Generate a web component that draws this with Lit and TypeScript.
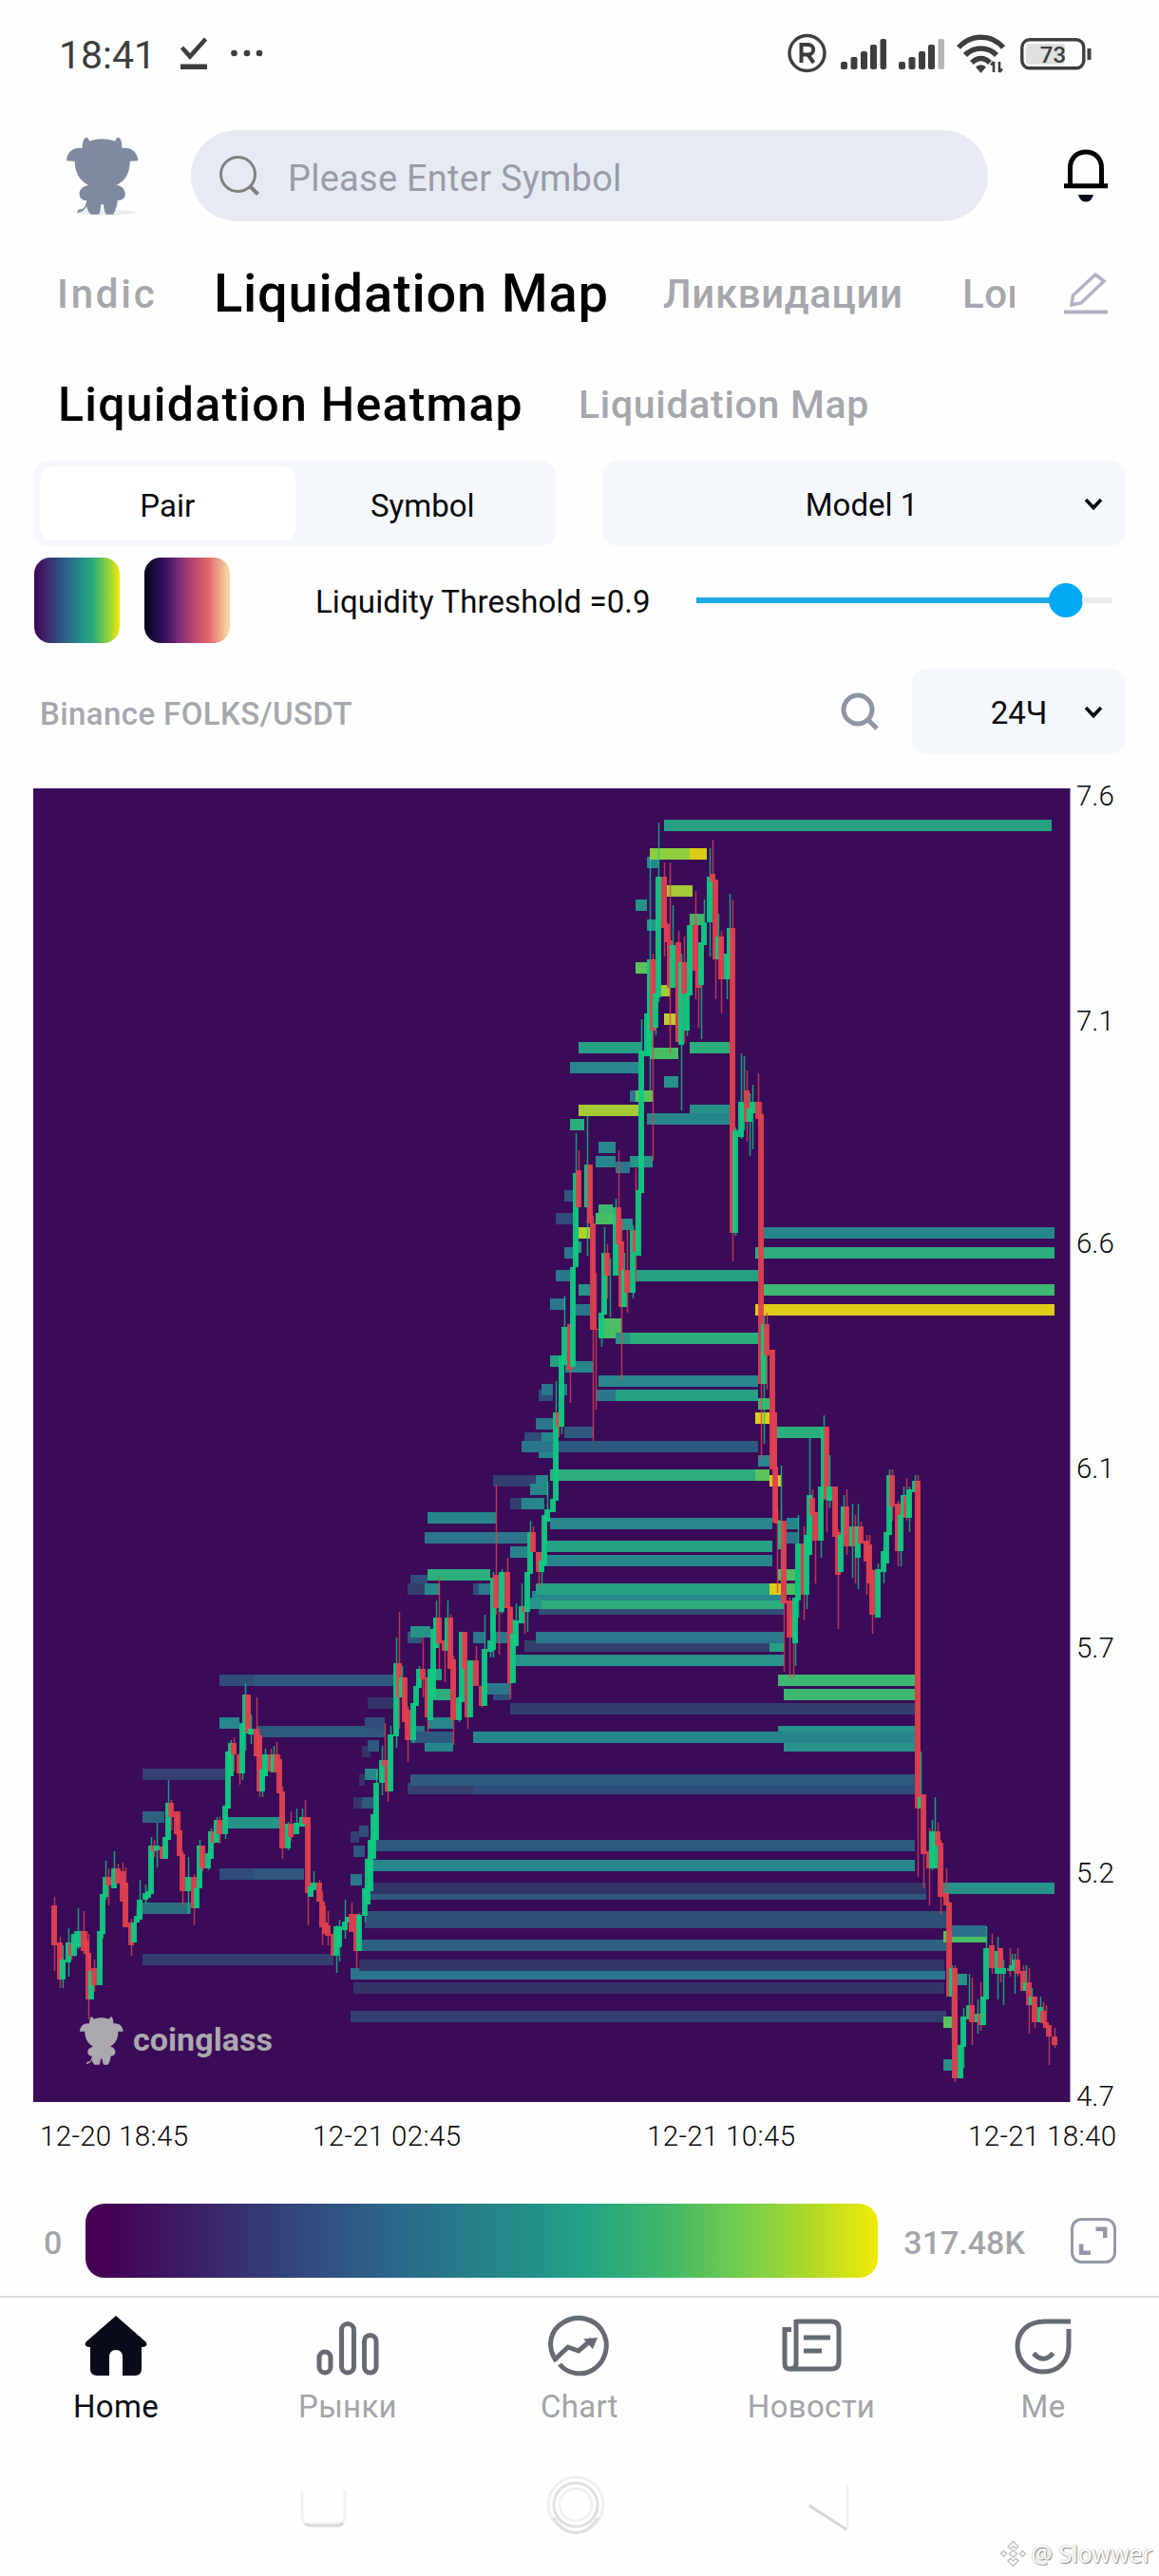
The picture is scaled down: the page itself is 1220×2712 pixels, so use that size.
import {css, html, LitElement, svg} from "lit"
import {customElement, property, state} from "lit/decorators.js"
import {classMap} from "lit/directives/class-map.js"

type Band = [x1: number, x2: number, y: number, color: string, height?: number]
type Candle = [side: string, x: number, high: number, top: number, bottom: number, low: number]

const A = "#333468"
const B = "#33406f"
const C = "#304c78"
const D = "#2e587e"
const E = "#2b768a"
const F = "#27868c"
const G = "#269288"
const H = "#25a083"
const I = "#2cae7c"
const J = "#3db870"
const K = "#5cc35a"
const L = "#a2cb35"
const Y = "#dccd18"

const BANDS: Band[] = [
    // upper part
    [699, 1107, 863, H], [681, 693, 902, F], [684, 726, 893, "#8ecf3f"], [726, 744, 893, Y],
    [702, 729, 932, L], [669, 681, 947, G], [681, 693, 968, G], [726, 741, 962, "#44b06c"],
    [669, 684, 1013, K], [696, 705, 1037, L], [699, 711, 1067, "#c0cf30"], [609, 675, 1097, H],
    [684, 714, 1103, "#48bd66"], [726, 769, 1097, I], [600, 672, 1118, F], [699, 714, 1133, G],
    [663, 669, 1148, E], [669, 687, 1148, K], [609, 672, 1163, L], [726, 769, 1163, G],
    [681, 769, 1172, F], [600, 615, 1178, I], [630, 648, 1202, F], [627, 648, 1217, F],
    [648, 663, 1223, E], [663, 687, 1217, G], [594, 603, 1253, D], [585, 603, 1277, C],
    [630, 645, 1268, J], [627, 648, 1277, "#48bd66"], [654, 666, 1283, G], [609, 621, 1292, "#b4cf2a"],
    [594, 604, 1313, E], [603, 612, 1307, G], [585, 600, 1337, E], [609, 621, 1352, G],
    [579, 595, 1367, E], [606, 621, 1373, E], [670, 798, 1337, H], [630, 654, 1388, "#4cbd62", 21],
    [648, 663, 1403, G], [663, 798, 1403, I], [579, 590, 1427, H], [595, 624, 1433, F],
    [630, 798, 1448, F], [628, 648, 1463, E], [648, 798, 1463, H], [567, 582, 1463, C],
    [570, 582, 1457, E], [588, 597, 1457, E], [564, 582, 1493, E], [594, 624, 1502, D],
    [552, 570, 1508, C], [570, 582, 1508, F], [567, 582, 1523, F], [549, 582, 1517, E],
    [588, 798, 1517, D], [579, 795, 1547, I], [795, 810, 1547, K], [519, 564, 1553, B],
    [564, 577, 1553, F], [558, 577, 1562, F],
    // open levels on the right
    [804, 1110, 1292, F], [795, 1110, 1313, I], [804, 1110, 1352, J], [795, 1110, 1373, Y],
    [798, 810, 1472, J], [795, 810, 1487, Y], [817, 866, 1502, I], [798, 810, 1532, F],
    [810, 822, 1553, "#dcc828"],
    // middle
    [537, 549, 1577, B], [549, 573, 1577, F], [450, 522, 1592, F], [447, 555, 1613, E],
    [537, 555, 1628, F], [579, 813, 1598, F], [576, 813, 1622, H], [573, 813, 1637, F],
    [432, 450, 1658, C], [429, 447, 1667, B], [447, 463, 1667, F], [450, 516, 1652, I],
    [498, 504, 1667, C], [504, 516, 1667, E], [560, 825, 1675, F], [564, 810, 1667, H],
    [558, 570, 1682, G], [570, 825, 1685, I, 9], [567, 825, 1694, C, 6], [810, 822, 1667, Y],
    [819, 837, 1652, "#4cbd62"], [828, 837, 1667, "#4cbd62"], [828, 841, 1598, F], [828, 840, 1613, E],
    [429, 444, 1718, D], [432, 453, 1712, G], [498, 510, 1718, E], [522, 534, 1718, E],
    [552, 810, 1727, B], [810, 825, 1727, H], [564, 825, 1718, E], [543, 825, 1742, G],
    [231, 267, 1763, C], [267, 414, 1763, D], [456, 465, 1757, H], [456, 474, 1778, I],
    [519, 537, 1778, C], [513, 537, 1772, E], [387, 414, 1787, A], [537, 963, 1793, B],
    [819, 963, 1763, J], [825, 963, 1778, J], [270, 405, 1817, D], [384, 405, 1808, C],
    [450, 477, 1808, F], [435, 447, 1817, E], [447, 477, 1832, F], [432, 477, 1823, D],
    [819, 963, 1817, G], [825, 963, 1832, G], [498, 963, 1823, F], [381, 390, 1838, A],
    [387, 399, 1832, D], [378, 384, 1868, A], [384, 398, 1862, F], [429, 498, 1877, B],
    [498, 963, 1877, C, 12], [432, 963, 1868, D], [372, 381, 1892, A], [381, 393, 1892, D],
    // lower part
    [231, 252, 1808, F], [150, 237, 1862, B], [150, 173, 1907, "#2e6080"], [240, 297, 1913, G],
    [231, 267, 1967, C], [267, 320, 1967, D], [150, 201, 2003, "#2a7080"], [150, 351, 2057, B],
    [369, 378, 1928, B], [378, 388, 1922, C], [372, 384, 1943, D], [369, 381, 1973, E],
    [393, 963, 1937, D], [390, 963, 1958, F], [387, 975, 1982, A], [387, 975, 1994, D, 6],
    [384, 996, 2012, "#2e5078", 18], [381, 996, 2042, "#2e6080"], [378, 994, 2063, A],
    [369, 995, 2075, E, 9], [369, 378, 2072, E, 3], [372, 994, 2087, A], [369, 996, 2117, B],
    [992, 1110, 1982, G], [993, 1002, 2033, K], [1002, 1039, 2039, "#48bd66", 6],
    [1002, 1038, 2027, "#2b708a"], [1008, 1018, 2078, G], [993, 1002, 2123, K], [993, 1002, 2168, G]
]

// u = closed up, d = closed down
const CANDLES: Candle[] = [
    ["d", 54, 1997, 2006, 2048, 2075], ["d", 60, 2039, 2045, 2084, 2093], ["u", 63, 2048, 2063, 2084, 2093],
    ["u", 69, 2030, 2045, 2066, 2081], ["d", 72, 2036, 2046, 2059, 2063], ["u", 75, 2033, 2036, 2059, 2060],
    ["u", 79, 2009, 2033, 2050, 2052], ["d", 85, 2012, 2033, 2054, 2057], ["d", 88, 2033, 2043, 2057, 2060],
    ["d", 90, 2036, 2056, 2105, 2126], ["u", 93, 2075, 2075, 2105, 2105], ["d", 96, 2063, 2072, 2090, 2097],
    ["u", 102, 2033, 2033, 2090, 2090], ["u", 105, 1994, 1994, 2036, 2041], ["u", 108, 1959, 1976, 1997, 2000],
    ["d", 111, 1967, 1976, 1985, 2006], ["u", 117, 1949, 1967, 1988, 1988], ["d", 121, 1962, 1967, 1983, 1983],
    ["d", 126, 1961, 1970, 2002, 2002], ["d", 129, 1966, 1982, 2029, 2029], ["d", 135, 2020, 2024, 2048, 2059],
    ["u", 138, 2020, 2024, 2045, 2045], ["u", 141, 2008, 2017, 2024, 2024], ["u", 144, 1979, 2000, 2021, 2021],
    ["u", 150, 1984, 1993, 2000, 2004], ["u", 153, 1988, 1991, 1998, 1998], ["u", 156, 1934, 1943, 1994, 1994],
    ["d", 159, 1937, 1943, 1949, 1955], ["u", 162, 1919, 1943, 1948, 1966], ["d", 168, 1943, 1944, 1957, 1957],
    ["u", 171, 1934, 1934, 1957, 1957], ["u", 174, 1874, 1898, 1937, 1937], ["d", 177, 1895, 1898, 1913, 1927],
    ["d", 183, 1907, 1907, 1931, 1931], ["d", 186, 1907, 1927, 1954, 1954], ["d", 189, 1949, 1952, 1991, 2006],
    ["u", 195, 1955, 1976, 1991, 2015], ["d", 201, 1973, 1976, 2009, 2027], ["u", 204, 1980, 1988, 2009, 2009],
    ["u", 207, 1937, 1943, 1988, 1988], ["d", 210, 1943, 1943, 1967, 1970], ["u", 216, 1948, 1951, 1967, 1969],
    ["u", 219, 1925, 1928, 1957, 1957], ["d", 222, 1922, 1928, 1940, 1941], ["u", 225, 1913, 1916, 1940, 1940],
    ["d", 228, 1913, 1916, 1931, 1941], ["u", 234, 1900, 1901, 1931, 1936], ["u", 237, 1843, 1844, 1904, 1904],
    ["u", 240, 1832, 1835, 1870, 1870], ["d", 243, 1829, 1835, 1847, 1865], ["d", 249, 1845, 1847, 1867, 1879],
    ["u", 252, 1814, 1814, 1867, 1874], ["u", 255, 1772, 1784, 1825, 1843], ["d", 258, 1784, 1784, 1824, 1824],
    ["u", 261, 1805, 1820, 1826, 1836], ["d", 267, 1787, 1820, 1849, 1849], ["d", 270, 1824, 1827, 1886, 1892],
    ["u", 273, 1860, 1863, 1886, 1892], ["u", 276, 1841, 1847, 1870, 1870], ["d", 282, 1841, 1847, 1865, 1865],
    ["u", 285, 1838, 1847, 1866, 1866], ["d", 288, 1834, 1847, 1866, 1866], ["d", 291, 1847, 1852, 1888, 1888],
    ["d", 294, 1881, 1886, 1946, 1957], ["u", 300, 1918, 1920, 1946, 1948], ["d", 303, 1907, 1920, 1934, 1938],
    ["u", 309, 1904, 1919, 1931, 1931], ["u", 315, 1904, 1913, 1923, 1923], ["d", 318, 1895, 1913, 1920, 1920],
    ["d", 321, 1913, 1913, 1993, 2027], ["u", 324, 1984, 1986, 1997, 1997], ["u", 327, 1970, 1982, 1990, 1990],
    ["d", 333, 1979, 1982, 2002, 2002], ["d", 336, 1991, 2002, 2029, 2048], ["d", 339, 2006, 2024, 2036, 2036],
    ["d", 342, 2012, 2027, 2038, 2048], ["d", 348, 2032, 2036, 2059, 2059], ["u", 351, 2027, 2028, 2059, 2077],
    ["u", 354, 2021, 2028, 2050, 2065], ["u", 360, 2000, 2023, 2032, 2041], ["u", 363, 2018, 2018, 2024, 2024],
    ["d", 367, 2003, 2015, 2034, 2034], ["d", 372, 2015, 2015, 2054, 2072], ["u", 375, 2014, 2016, 2054, 2054],
    ["u", 381, 1985, 1988, 2017, 2024], ["u", 384, 1956, 1957, 2005, 2005], ["u", 387, 1935, 1937, 1991, 1991],
    ["u", 390, 1906, 1910, 1957, 1957], ["u", 393, 1864, 1877, 1937, 1937], ["u", 399, 1838, 1853, 1877, 1890],
    ["d", 402, 1814, 1853, 1859, 1859], ["d", 405, 1853, 1855, 1886, 1897], ["u", 408, 1817, 1826, 1886, 1886],
    ["u", 414, 1724, 1751, 1828, 1840], ["d", 417, 1697, 1751, 1787, 1820], ["u", 420, 1754, 1766, 1787, 1787],
    ["d", 423, 1765, 1766, 1813, 1813], ["d", 426, 1796, 1800, 1832, 1855], ["u", 432, 1793, 1793, 1832, 1835],
    ["u", 435, 1772, 1775, 1796, 1796], ["u", 438, 1754, 1757, 1777, 1777], ["d", 442, 1724, 1757, 1768, 1787],
    ["d", 447, 1765, 1766, 1808, 1824], ["u", 450, 1757, 1757, 1811, 1811], ["u", 453, 1713, 1715, 1787, 1787],
    ["u", 456, 1685, 1703, 1735, 1735], ["d", 459, 1661, 1703, 1730, 1757], ["d", 465, 1726, 1727, 1738, 1771],
    ["u", 468, 1685, 1703, 1738, 1738], ["d", 471, 1700, 1703, 1757, 1757], ["d", 474, 1743, 1747, 1811, 1837],
    ["u", 480, 1786, 1787, 1811, 1813], ["u", 483, 1718, 1718, 1792, 1792], ["d", 486, 1718, 1718, 1757, 1757],
    ["d", 489, 1748, 1753, 1808, 1820], ["u", 492, 1748, 1748, 1808, 1808], ["d", 498, 1733, 1748, 1775, 1775],
    ["d", 504, 1772, 1775, 1796, 1798], ["u", 507, 1700, 1736, 1796, 1796], ["u", 513, 1727, 1727, 1739, 1745],
    ["u", 516, 1655, 1661, 1737, 1745], ["d", 519, 1563, 1658, 1693, 1700], ["d", 522, 1680, 1685, 1693, 1742],
    ["u", 525, 1652, 1655, 1697, 1699], ["d", 531, 1640, 1655, 1693, 1693], ["d", 534, 1691, 1692, 1772, 1789],
    ["u", 537, 1705, 1720, 1772, 1772], ["u", 540, 1688, 1706, 1733, 1733], ["u", 546, 1667, 1691, 1709, 1709],
    ["d", 549, 1691, 1692, 1697, 1720], ["u", 552, 1653, 1655, 1697, 1718], ["u", 555, 1601, 1613, 1657, 1657],
    ["d", 558, 1607, 1613, 1634, 1634], ["d", 564, 1634, 1634, 1655, 1671], ["u", 567, 1634, 1643, 1655, 1667],
    ["u", 570, 1595, 1595, 1648, 1648], ["u", 573, 1560, 1589, 1602, 1602], ["u", 579, 1577, 1578, 1592, 1592],
    ["u", 582, 1454, 1487, 1580, 1580], ["d", 585, 1485, 1487, 1502, 1513], ["u", 588, 1427, 1427, 1502, 1510],
    ["u", 591, 1364, 1397, 1437, 1437], ["d", 597, 1393, 1394, 1442, 1477], ["u", 600, 1334, 1334, 1439, 1439],
    ["u", 603, 1193, 1235, 1334, 1334], ["d", 606, 1211, 1232, 1271, 1271], ["u", 615, 1175, 1226, 1271, 1322],
    ["d", 618, 1226, 1226, 1288, 1288], ["d", 621, 1280, 1288, 1400, 1517], ["d", 624, 1340, 1399, 1400, 1484],
    ["u", 630, 1380, 1382, 1409, 1418], ["u", 633, 1292, 1319, 1384, 1384], ["d", 636, 1310, 1319, 1343, 1367],
    ["u", 639, 1325, 1343, 1343, 1387], ["u", 645, 1262, 1271, 1343, 1343], ["d", 648, 1211, 1271, 1310, 1310],
    ["d", 651, 1284, 1307, 1376, 1453], ["u", 654, 1319, 1337, 1376, 1376], ["d", 657, 1295, 1337, 1361, 1382],
    ["u", 663, 1290, 1295, 1361, 1367], ["d", 666, 1230, 1295, 1318, 1350], ["u", 669, 1250, 1253, 1322, 1322],
    ["u", 672, 1073, 1106, 1256, 1256], ["u", 678, 1067, 1067, 1112, 1112], ["u", 681, 905, 1010, 1110, 1148],
    ["d", 684, 1004, 1010, 1085, 1222], ["u", 687, 1046, 1046, 1082, 1090], ["u", 690, 866, 923, 1050, 1055],
    ["d", 696, 908, 923, 977, 1007], ["d", 699, 971, 973, 992, 992], ["d", 702, 908, 990, 1040, 1108],
    ["u", 705, 953, 995, 1040, 1040], ["d", 711, 980, 992, 1097, 1097], ["u", 714, 1004, 1013, 1100, 1169],
    ["d", 717, 986, 1013, 1046, 1098], ["u", 720, 1043, 1046, 1085, 1091], ["u", 723, 974, 974, 1048, 1048],
    ["d", 729, 938, 974, 1022, 1052], ["d", 732, 992, 1020, 1040, 1082], ["u", 735, 992, 992, 1037, 1094],
    ["u", 738, 947, 971, 995, 995], ["u", 744, 893, 923, 971, 1007], ["d", 747, 884, 920, 928, 928],
    ["d", 750, 926, 926, 1010, 1052], ["u", 753, 962, 986, 1010, 1010], ["d", 756, 980, 986, 1031, 1067],
    ["u", 762, 1004, 1004, 1031, 1052], ["u", 765, 941, 977, 1031, 1031], ["d", 768, 947, 977, 1298, 1328],
    ["u", 771, 1187, 1190, 1298, 1301], ["u", 777, 1109, 1160, 1197, 1199], ["u", 780, 1112, 1163, 1180, 1190],
    ["d", 783, 1127, 1148, 1181, 1202], ["u", 786, 1151, 1167, 1181, 1217], ["u", 789, 1142, 1160, 1172, 1210],
    ["d", 795, 1130, 1160, 1178, 1178], ["d", 798, 1160, 1173, 1457, 1537], ["u", 801, 1385, 1394, 1457, 1520],
    ["d", 804, 1382, 1394, 1427, 1463], ["d", 810, 1421, 1421, 1547, 1547], ["d", 812, 1487, 1487, 1547, 1547],
    ["d", 813, 1544, 1544, 1603, 1603], ["d", 815, 1589, 1600, 1604, 1677], ["u", 819, 1543, 1601, 1631, 1667],
    ["d", 822, 1601, 1601, 1688, 1760], ["d", 828, 1682, 1685, 1724, 1767], ["d", 832, 1683, 1700, 1724, 1766],
    ["u", 834, 1682, 1682, 1730, 1754], ["u", 837, 1595, 1625, 1685, 1703], ["d", 843, 1607, 1625, 1679, 1706],
    ["u", 846, 1610, 1616, 1679, 1694], ["u", 849, 1513, 1574, 1637, 1637], ["d", 852, 1568, 1577, 1595, 1595],
    ["d", 855, 1592, 1592, 1622, 1667], ["u", 861, 1565, 1565, 1622, 1640], ["u", 864, 1490, 1502, 1577, 1577],
    ["d", 867, 1502, 1502, 1579, 1613], ["u", 870, 1532, 1565, 1580, 1588], ["d", 876, 1565, 1565, 1618, 1618],
    ["d", 879, 1610, 1613, 1658, 1715], ["u", 882, 1616, 1616, 1655, 1655], ["u", 885, 1574, 1586, 1617, 1617],
    ["d", 888, 1568, 1586, 1628, 1637], ["u", 894, 1583, 1607, 1628, 1661], ["d", 897, 1595, 1607, 1628, 1667],
    ["u", 900, 1583, 1607, 1640, 1673], ["d", 903, 1602, 1607, 1625, 1625], ["d", 909, 1616, 1622, 1644, 1679],
    ["d", 912, 1616, 1626, 1667, 1667], ["d", 915, 1652, 1653, 1700, 1720], ["u", 921, 1646, 1652, 1703, 1703],
    ["u", 927, 1628, 1633, 1655, 1667], ["u", 930, 1612, 1613, 1646, 1646], ["u", 933, 1547, 1553, 1616, 1616],
    ["d", 936, 1547, 1553, 1586, 1601], ["d", 942, 1580, 1583, 1633, 1649], ["u", 945, 1592, 1595, 1633, 1649],
    ["u", 948, 1565, 1574, 1597, 1597], ["d", 951, 1556, 1575, 1598, 1601], ["u", 954, 1565, 1568, 1598, 1613],
    ["u", 960, 1553, 1559, 1571, 1571], ["d", 963, 1553, 1559, 1904, 1976], ["u", 966, 1844, 1892, 1904, 1904],
    ["d", 969, 1889, 1889, 1952, 1988], ["d", 975, 1925, 1949, 1967, 2006], ["u", 978, 1916, 1928, 1967, 1969],
    ["u", 981, 1892, 1928, 1967, 1967], ["d", 984, 1919, 1928, 1943, 1943], ["d", 987, 1937, 1940, 1997, 2015],
    ["d", 993, 1967, 1993, 2006, 2006], ["d", 996, 2002, 2003, 2102, 2102], ["u", 999, 2069, 2072, 2102, 2147],
    ["d", 1002, 2069, 2072, 2188, 2192], ["u", 1008, 2152, 2153, 2188, 2188], ["u", 1011, 2114, 2123, 2155, 2177],
    ["u", 1017, 2078, 2111, 2126, 2126], ["d", 1020, 2082, 2111, 2129, 2153], ["u", 1026, 2105, 2120, 2129, 2141],
    ["d", 1029, 2087, 2120, 2132, 2138], ["u", 1032, 2102, 2102, 2132, 2132], ["u", 1035, 2028, 2051, 2105, 2105],
    ["d", 1041, 2036, 2048, 2072, 2078], ["u", 1047, 2039, 2054, 2078, 2105], ["d", 1050, 2051, 2051, 2072, 2087],
    ["u", 1053, 2063, 2072, 2078, 2111], ["d", 1060, 2051, 2072, 2075, 2081], ["u", 1062, 2057, 2069, 2075, 2075],
    ["u", 1065, 2057, 2063, 2072, 2099], ["d", 1068, 2051, 2063, 2078, 2081], ["d", 1074, 2069, 2075, 2096, 2096],
    ["u", 1077, 2069, 2087, 2096, 2099], ["d", 1080, 2072, 2087, 2111, 2141], ["u", 1083, 2093, 2102, 2111, 2111],
    ["d", 1086, 2102, 2102, 2129, 2135], ["u", 1092, 2102, 2113, 2129, 2129], ["d", 1095, 2108, 2117, 2130, 2130],
    ["d", 1098, 2111, 2129, 2135, 2135], ["d", 1101, 2132, 2132, 2144, 2174], ["d", 1107, 2135, 2144, 2153, 2156]
]

const PRICES: [string, number][] = [
    ["7.6", 848], ["7.1", 1085], ["6.6", 1319], ["6.1", 1556], ["5.7", 1745], ["5.2", 1982], ["4.7", 2217]
]

const TIMES: [string, number][] = [
    ["12-20 18:45", 42], ["12-21 02:45", 329], ["12-21 10:45", 681], ["12-21 18:40", 1019]
]

const BULL = "M60 146C62 115 85 102 110 106C110 85 118 72 122 72C128 72 132 78 133 84C155 74 192 74 215 84C216 78 222 70 228 73C236 80 237 95 237 106C262 102 286 115 288 146L262 147C262 180 250 208 220 222C240 226 248 240 247 252C246 266 234 272 223 270C222 290 214 305 209 315L186 315C180 305 179 295 178 284L170 284C169 295 168 305 164 315L138 315C130 308 126 300 124 290C118 300 112 306 104 308L94 311C93 302 100 297 108 299C116 296 122 288 124 271C110 272 101 262 101 249C102 236 112 226 130 223C100 208 87 180 86 147Z"

@customElement("liquidation-chart")
export class LiquidationChart extends LitElement {
    static styles = css`
      :host {
        display: block;
        flex: none;
      }

      .chart {
        display: block;
        width: 1220px;
        height: 1460px;
        overflow: visible;
      }

      .axis {
        font: 300 29.5px Roboto, sans-serif;
        fill: #08080a;
      }

      .brand {
        font: 700 34px Roboto, sans-serif;
        fill: #aba8ae;
      }

      .u {
        fill: #0ecb81;
        stroke: #0ecb81;
      }

      .d {
        fill: #e0424f;
        stroke: #e0424f;
      }

      .body {
        stroke: none;
        fill-opacity: .93;
      }

      .wick {
        fill: none;
        stroke-width: 1.5;
        stroke-opacity: .78;
      }
    `

    render() {
        return html`
            <svg class="chart" viewBox="0 830 1220 1460">
                <rect x="35" y="830" width="1091.5" height="1383" fill="#3a0b58"></rect>
                ${BANDS.map(([x1, x2, y, color, h = 12]) => svg`
                    <rect x=${x1} y=${y} width=${x2 - x1} height=${h} fill=${color}></rect>`)}
                ${CANDLES.map(([side, x, high, top, bottom, low]) => svg`
                    <g class=${side}>
                        <path class="wick" d="M${x + 3.5} ${high}V${low}"></path>
                        <rect class="body" x=${x} y=${top} width="6" height=${bottom - top}></rect>
                    </g>`)}
                <path transform="translate(84 2123) scale(.2 .2085) translate(-60 -71)" d=${BULL} fill="#aba8ae"></path>
                <text class="brand" x="140" y="2159" textLength="147">coinglass</text>
                ${PRICES.map(([label, y]) => svg`<text class="axis" x="1133" y=${y}>${label}</text>`)}
                ${TIMES.map(([label, x]) => svg`<text class="axis" x=${x} y="2259" textLength="156">${label}</text>`)}
            </svg>`
    }
}

@customElement("bottom-tab")
export class BottomTab extends LitElement {
    @property() label = ""
    @property({type: Boolean}) active = false

    static styles = css`
      :host {
        display: flex;
        flex-direction: column;
        align-items: center;
        gap: 12px;
        flex: 1;
        font-size: 33px;
        line-height: 40px;
        letter-spacing: .3px;
        color: #a3a4a9;
      }

      .active {
        color: #0b0e14;
      }
    `

    render() {
        return html`<slot></slot><span class=${classMap({active: this.active})}>${this.label}</span>`
    }
}

@customElement("app-root")
export class AppRoot extends LitElement {
    @state() threshold = 0.9

    static styles = css`
      :host {
        display: flex;
        flex-direction: column;
        width: 1220px;
        height: 2712px;
        overflow: hidden;
        background: #fefefe;
        color: #08090c;
        font-family: Roboto, "Noto Sans", sans-serif;
      }

      :host > div {
        flex: none;
      }

      svg {
        display: block;
        flex: none;
        overflow: visible;
      }

      .status {
        display: flex;
        align-items: center;
        height: 114px;
        padding: 0 70px 0 62px;
        color: #3d3e40;
        font-size: 41px;
      }

      .clock {
        width: 128px;
        padding-top: 1px;
      }

      .grow {
        flex: 1;
      }

      .header {
        display: flex;
        align-items: center;
        height: 142px;
        padding: 0 54px 0 70px;
      }

      .search {
        display: flex;
        align-items: center;
        gap: 29px;
        width: 839px;
        height: 96px;
        margin: 0 80px 0 55px;
        padding-left: 30px;
        box-sizing: border-box;
        border-radius: 48px;
        background: #e6ebf3;
        color: #9a9ba8;
        font-size: 38px;
        letter-spacing: .25px;
      }

      .search span {
        padding-top: 6px;
      }

      .tabs {
        display: flex;
        align-items: center;
        height: 106px;
        margin-bottom: 2px;
        padding: 0 53px 0 60px;
        box-sizing: border-box;
        color: #a6a7ad;
        font-size: 42px;
        font-weight: 500;
        letter-spacing: .6px;
        white-space: nowrap;
      }

      .tabs > span {
        flex: none;
      }

      .tabs .current {
        width: 414px;
        margin: 0 59px 0 61px;
        color: #000;
        font-size: 56px;
        letter-spacing: .8px;
      }

      .tabs .first {
        width: 104px;
        letter-spacing: 2.8px;
      }

      .second {
        width: 254px;
      }

      .cut {
        width: 55px;
        margin: 0 52px 0 61px;
        overflow: hidden;
      }

      .subtabs {
        display: flex;
        align-items: center;
        gap: 58px;
        height: 121px;
        padding: 3px 0 0 61px;
        box-sizing: border-box;
        color: #a6a7ad;
        font-size: 41px;
        font-weight: 500;
        letter-spacing: .7px;
      }

      .subtabs .current {
        color: #000;
        font-size: 50px;
        letter-spacing: 1.25px;
      }

      .row {
        display: flex;
        align-items: center;
        padding: 0 36px;
        font-size: 33px;
      }

      .segment {
        display: flex;
        width: 549px;
        height: 90px;
        padding: 6px;
        box-sizing: border-box;
        border-radius: 15px;
        background: #f4f7fb;
      }

      .segment span {
        display: flex;
        flex: 1;
        align-items: center;
        justify-content: center;
        padding-top: 4px;
        box-sizing: border-box;
        border-radius: 14px;
      }

      .segment .on {
        background: #fff;
      }

      .select {
        display: flex;
        align-items: center;
        height: 90px;
        padding-right: 23px;
        box-sizing: border-box;
        border-radius: 15px;
        background: #f4f7fb;
      }

      .select span {
        flex: 1;
        padding-top: 2px;
        text-align: center;
      }

      .model {
        width: 549px;
        margin-left: 50px;
      }

      .model span {
        padding-left: 38px;
      }

      .period {
        width: 224px;
        margin-left: 35px;
      }

      .period span {
        padding-left: 44px;
      }

      .palettes {
        margin: 12px 0 27px;
      }

      .swatch {
        width: 90px;
        height: 90px;
        margin-right: 26px;
        border-radius: 17px;
      }

      .viridis {
        background: linear-gradient(90deg, #440154, #3a3270 18%, #2d5f88 36%, #23908a 55%, #2aa97c 68%, #72c94c 82%, #f0e80c);
      }

      .magma {
        background: linear-gradient(90deg, #04031a, #2f0f5c 22%, #7a2a79 40%, #b8466f 57%, #e0636a 74%, #f6d39f 97%);
      }

      .threshold {
        width: 354px;
        margin: 0 47px 0 64px;
        padding-top: 3px;
        letter-spacing: .1px;
        white-space: nowrap;
      }

      .slider {
        display: flex;
        align-items: center;
        width: 438px;
        height: 36px;
      }

      .filled {
        height: 6px;
        background: #1ba9ea;
      }

      .rest {
        flex: 1;
        height: 6px;
        background: #ebebed;
      }

      .thumb {
        width: 36px;
        height: 36px;
        margin: 0 -1px;
        border-radius: 50%;
        background: #03a9f4;
      }

      .pair {
        margin-bottom: 36px;
      }

      .title {
        padding: 4px 0 0 6px;
        color: #a6a7ad;
        font-weight: 500;
        letter-spacing: .4px;
      }

      .legend {
        display: flex;
        align-items: center;
        height: 78px;
        padding: 0 45px 0 46px;
        margin: 30px 0 19px;
        color: #a3a4a9;
        font-size: 34px;
        font-weight: 500;
      }

      .legend span {
        padding-top: 4px;
      }

      .scale {
        width: 834px;
        height: 78px;
        margin: 0 27px 0 25px;
        border-radius: 20px;
        background: linear-gradient(90deg, #440154 0, #440154 3%, #33427a 25%, #2b6a8b 40%, #238f87 56%, #22a384 63%, #3bb56d 72%, #74cd4c 83%, #aad92b 91%, #f2ea08);
      }

      .bottom {
        display: flex;
        height: 174px;
        padding-top: 19px;
        box-sizing: border-box;
        border-top: 2px solid #dadbdc;
      }

      .system {
        display: flex;
        height: 80px;
        padding: 10px 0 0 314px;
        box-sizing: border-box;
      }

      .author {
        display: flex;
        align-items: center;
        justify-content: flex-end;
        gap: 4px;
        padding-right: 7px;
        color: #fdfdfd;
        font: 25px "Noto Sans", sans-serif;
        line-height: 34px;
        text-shadow: 1px 1px 1px #8a8a8a, 0 0 2px #aaa;
      }
    `

    private chevron() {
        return html`
            <svg width="20" height="13" viewBox="0 0 20 13">
                <path d="M2 2L10 10.5L18 2" fill="none" stroke="#08090c" stroke-width="3.6"></path>
            </svg>`
    }

    private signal(last: string) {
        return html`
            <svg width="48" height="32" viewBox="0 0 48 32" fill="#3d3e40">
                <rect x="0" y="24" width="7" height="8" rx="2"></rect>
                <rect x="10.5" y="19" width="7" height="13" rx="2"></rect>
                <rect x="21" y="13" width="7" height="19" rx="2"></rect>
                <rect x="31" y="6" width="7" height="26" rx="2"></rect>
                <rect x="41.5" y="0" width="6.5" height="32" rx="2" fill=${last}></rect>
            </svg>`
    }

    private statusBar() {
        return html`
            <div class="status">
                <span class="clock">18:41</span>
                <svg width="28" height="34" viewBox="0 0 28 34">
                    <path d="M1.500 10L10 19.500L26.500 1" fill="none" stroke="#3d3e40" stroke-width="4.500"></path>
                    <rect x="0" y="27.500" width="28" height="5.500" fill="#3d3e40"></rect>
                </svg>
                <svg width="60" height="34" viewBox="0 0 60 34" fill="#3d3e40">
                    <circle cx="28.500" cy="16" r="3.300"></circle>
                    <circle cx="42" cy="16" r="3.300"></circle>
                    <circle cx="55" cy="16" r="3.300"></circle>
                </svg>
                <span class="grow"></span>
                <svg width="56" height="42" viewBox="0 0 56 42" fill="none" stroke="#3d3e40">
                    <circle cx="20.500" cy="20" r="18.500" stroke-width="3.400"></circle>
                    <path d="M14.500 30V11H21.500C29 11 29 21.500 21.500 21.500H14.500M21.500 21.500L27.500 30" stroke-width="4"></path>
                </svg>
                ${this.signal("#3d3e40")}
                <svg width="13" height="1"></svg>
                ${this.signal("#b4b5b7")}
                <svg width="80" height="42" viewBox="0 0 80 42" fill="none" stroke="#3d3e40" stroke-width="5.500">
                    <path d="M15 14C28-.5 50-.5 62 14"></path>
                    <path d="M22 22C31 12.500 46 12.500 55 22"></path>
                    <path d="M29 30C35 24 42 24 48 30"></path>
                    <path d="M38.500 41L33 34.500Q38.500 30 44 34.500Z" fill="#3d3e40" stroke="none"></path>
                    <path d="M52 40V29M49 32.500L52 29M58 29V40M61 36.500L58 40" stroke-width="2.600"></path>
                </svg>
                <svg width="76" height="34" viewBox="0 0 76 34">
                    <rect x="1.800" y="1.800" width="65" height="30" rx="8" fill="none" stroke="#3d3e40" stroke-width="3.400"></rect>
                    <rect x="6" y="6" width="41" height="22" rx="3" fill="#dfe0e0"></rect>
                    <path d="M72.500 11V23" stroke="#3d3e40" stroke-width="4"></path>
                    <text x="34.500" y="25.500" text-anchor="middle" font-size="24" font-weight="500" fill="#3d3e40">73</text>
                </svg>
            </div>`
    }

    private bottomBar() {
        return html`
            <div class="bottom">
                <bottom-tab label="Home" active>
                    <svg width="66" height="64" viewBox="0 0 66 64">
                        <path d="M33 0L65 28Q67 33 60 33V56Q60 63 53 63H40V44Q40 36 33 36Q26 36 26 44V63H13Q6 63 6 56V33Q-1 33 1 28Z" fill="#070c18"></path>
                    </svg>
                </bottom-tab>
                <bottom-tab label="Рынки">
                    <svg width="66" height="64" viewBox="0 0 66 64" fill="none" stroke="#656a73" stroke-width="5">
                        <rect x="3" y="38" width="12" height="22" rx="6"></rect>
                        <rect x="26.500" y="8.500" width="13" height="51.500" rx="6.500"></rect>
                        <rect x="50.500" y="20.500" width="12.500" height="39.500" rx="6.250"></rect>
                    </svg>
                </bottom-tab>
                <bottom-tab label="Chart">
                    <svg width="66" height="64" viewBox="0 0 66 64" fill="none" stroke="#656a73" stroke-width="5">
                        <path d="M8.500 48C-2 32 2 15 16 7C31-2 49 3 57 16C66 31 60 49 47 57C35 64 20 61 12 51"></path>
                        <path d="M7 46L21 33L32 37L46 25"></path>
                        <path d="M37 24.500L52 23L47 35Z" fill="#656a73" stroke="none"></path>
                    </svg>
                </bottom-tab>
                <bottom-tab label="Новости">
                    <svg width="66" height="64" viewBox="0 0 66 64" fill="none" stroke="#656a73" stroke-width="5">
                        <path d="M17 6H54Q62 6 62 14V48Q62 56 54 56H10Q5 56 5 50V14.500H12"></path>
                        <path d="M17 4V50Q17 56 11 56"></path>
                        <path d="M25 23H53M25 37H44"></path>
                    </svg>
                </bottom-tab>
                <bottom-tab label="Me">
                    <svg width="66" height="64" viewBox="0 0 66 64" fill="none" stroke="#656a73" stroke-width="5">
                        <path d="M62 6H35C18 6 6 16 6 32C6 48 18 59 33 59C49 59 60 48 60 32V14"></path>
                        <path d="M23 39.500Q33 51 43.500 39.500"></path>
                    </svg>
                </bottom-tab>
            </div>`
    }

    render() {
        return html`
            ${this.statusBar()}
            <div class="header">
                <svg width="76" height="82" viewBox="60 70 230 246" preserveAspectRatio="none">
                    <ellipse cx="182" cy="309" rx="98" ry="9" fill="#ececee"></ellipse>
                    <path d=${BULL} fill="#7f8a9f"></path>
                </svg>
                <div class="search">
                    <svg width="43" height="43" viewBox="0 0 43 43" fill="none" stroke="#808080" stroke-width="3">
                        <circle cx="19.500" cy="19.500" r="18"></circle>
                        <path d="M32 32L40.500 40.500" stroke-width="4"></path>
                    </svg>
                    <span>Please Enter Symbol</span>
                </div>
                <svg width="46" height="56" viewBox="0 0 46 56">
                    <path d="M6.500 38.500V20C6.500 9 14 3 23 3C32 3 39.500 9 39.500 20V38.500M0 38.800H46" fill="none" stroke="#000" stroke-width="5"></path>
                    <path d="M15 48H31Q29 55.500 23 55.500Q17 55.500 15 48Z" fill="#020c1c"></path>
                </svg>
            </div>
            <div class="tabs">
                <span class="first">Indic</span>
                <span class="current">Liquidation Map</span>
                <span class="second">Ликвидации</span>
                <span class="cut">Lon</span>
                <svg width="46" height="46" viewBox="0 0 46 46" fill="none" stroke="#b3b2c4">
                    <path d="M33 3L42 10L18 33L8 35L9.500 25Z" stroke-width="3.500"></path>
                    <path d="M0 42.500H46" stroke-width="4"></path>
                </svg>
            </div>
            <div class="subtabs">
                <span class="current">Liquidation Heatmap</span>
                <span>Liquidation Map</span>
            </div>
            <div class="row">
                <div class="segment"><span class="on">Pair</span><span>Symbol</span></div>
                <div class="select model"><span>Model 1</span>${this.chevron()}</div>
            </div>
            <div class="row palettes">
                <div class="swatch viridis"></div>
                <div class="swatch magma"></div>
                <span class="threshold">Liquidity Threshold =${this.threshold}</span>
                <div class="slider">
                    <div class="filled" style="width:${this.threshold * 413}px"></div>
                    <div class="thumb"></div>
                    <div class="rest"></div>
                </div>
            </div>
            <div class="row pair">
                <span class="title">Binance FOLKS/USDT</span>
                <span class="grow"></span>
                <svg width="40" height="40" viewBox="0 0 40 40" fill="none" stroke="#8f95a6" stroke-width="5">
                    <circle cx="18" cy="18" r="15"></circle>
                    <path d="M28.500 28.500L38 38"></path>
                </svg>
                <div class="select period"><span>24Ч</span>${this.chevron()}</div>
            </div>
            <liquidation-chart></liquidation-chart>
            <div class="legend">
                <span>0</span>
                <div class="scale"></div>
                <span>317.48K</span>
                <i class="grow"></i>
                <svg width="48" height="48" viewBox="0 0 48 48">
                    <rect x="1.500" y="1.500" width="45" height="45" rx="10" fill="none" stroke="#9499a8" stroke-width="3"></rect>
                    <path d="M26.500 9.500H38.500V21H34V14H26.500ZM9 27.500H13.500V34.500H21V39H9Z" fill="#9499a8"></path>
                </svg>
            </div>
            ${this.bottomBar()}
            <div class="system">
                <svg width="600" height="70" viewBox="0 0 600 70" fill="none" stroke-width="3">
                    <path d="M4 20V48Q4 56 11 56H42Q49 56 49 48V20" stroke="#f1f1f1"></path>
                    <path d="M7 56Q9 58 13 58H41Q45 58 47 55" stroke="#d9d9d9"></path>
                    <circle cx="292" cy="36" r="29" stroke="#efefef"></circle>
                    <circle cx="292" cy="36" r="23" stroke="#dfe0e0"></circle>
                    <circle cx="292" cy="36" r="17" stroke="#f1f1f1"></circle>
                    <path d="M269 50Q278 65 292 65.500Q306 65 315 50" stroke="#dedede"></path>
                    <path d="M578 15V62" stroke="#f0f0f0"></path>
                    <path d="M538 37L577 62" stroke="#d6d6d6"></path>
                </svg>
            </div>
            <div class="author">
                <svg width="29" height="29" viewBox="0 0 29 29" fill="none" stroke="#c2c2c2" stroke-width="1.500">
                    <path d="M9 7L14.500 1.500L20 7L17.500 9.500L14.500 6.500L11.500 9.500ZM9 22L14.500 27.500L20 22L17.500 19.500L14.500 22.500L11.500 19.500ZM1.500 14.500L4.500 11.500L7.500 14.500L4.500 17.500ZM21.500 14.500L24.500 11.500L27.500 14.500L24.500 17.500ZM10.500 14.500L14.500 10.500L18.500 14.500L14.500 18.500Z"></path>
                </svg>
                <span>@ Slowwer</span>
            </div>`
    }
}
